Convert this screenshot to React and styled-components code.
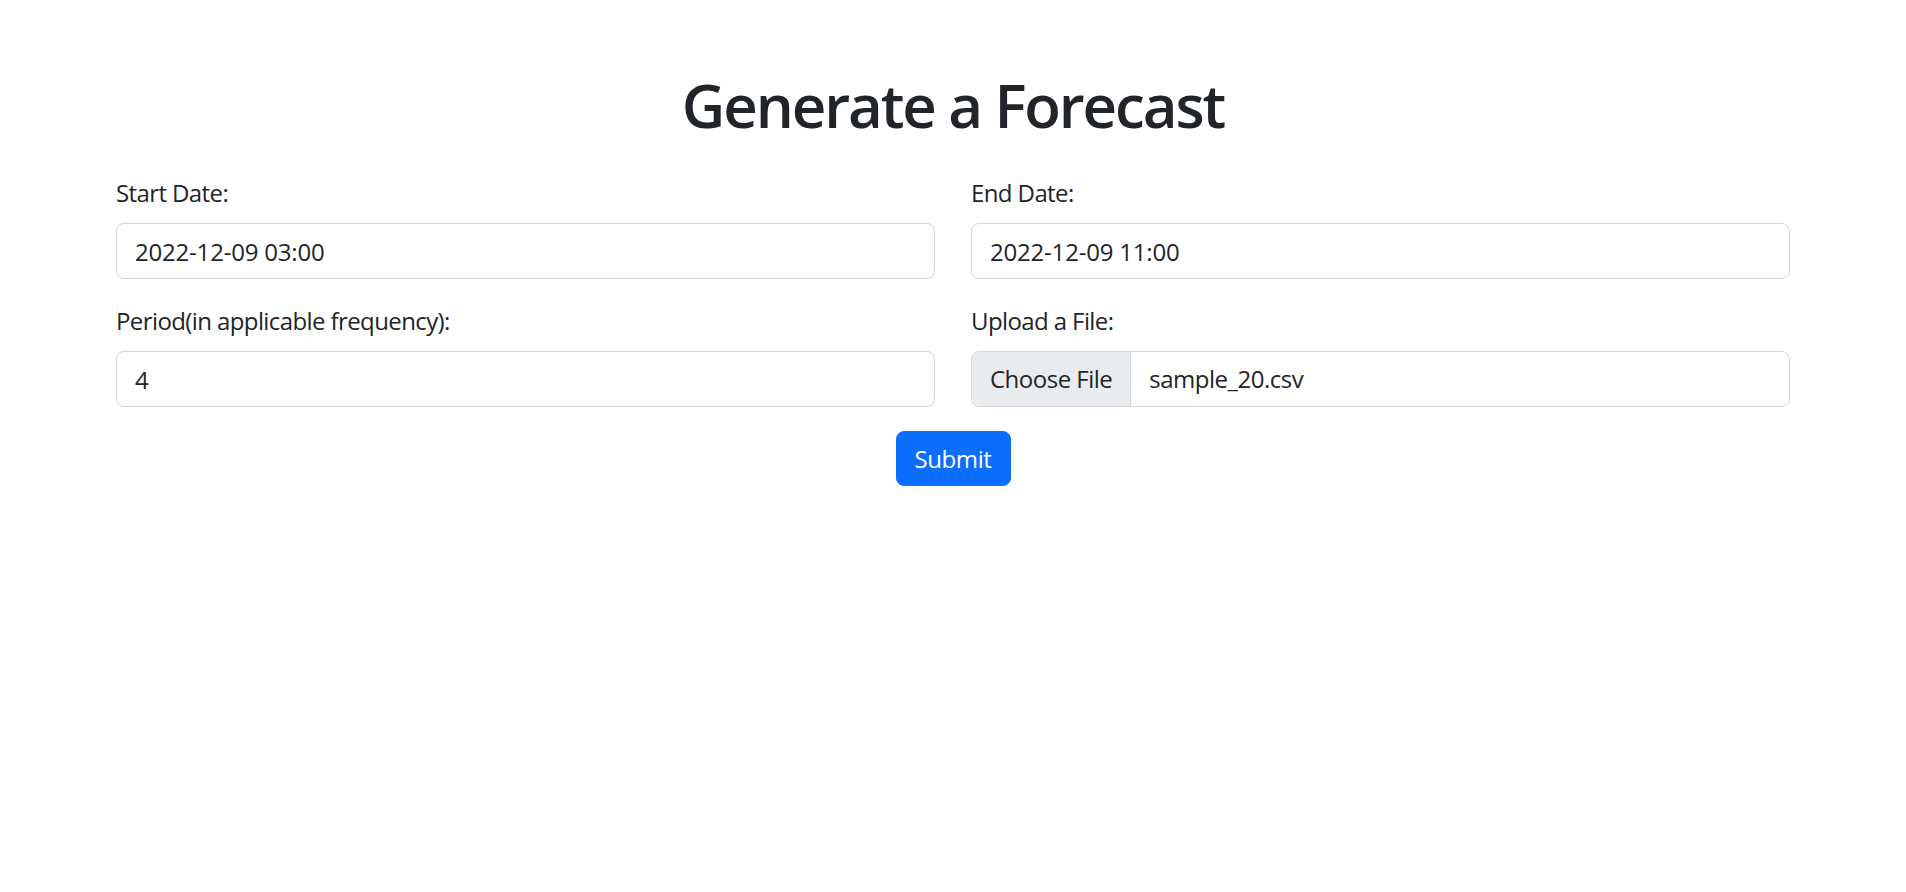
import React from "react";
import styled, { createGlobalStyle } from "styled-components";

const Global = createGlobalStyle`
  html, body { margin: 0; padding: 0; background: #fff; }
  body {
    font-family: "Open Sans", "Noto Sans", sans-serif;
    font-size: 24px;
    line-height: 1.5;
    color: #212529;
  }
  * { box-sizing: border-box; }
`;

const Container = styled.div`
  max-width: 1710px;
  margin: 0 auto;
  padding: 69px 18px 0;
`;

const Title = styled.h1`
  margin: 0 0 34px;
  text-align: center;
  font-size: 60px;
  font-weight: 600;
  line-height: 72px;
  letter-spacing: -2.1px;
  color: #212529;
`;

const Form = styled.form`
  display: flex;
  flex-direction: column;
`;

const Row = styled.div`
  display: grid;
  grid-template-columns: 1fr 1fr;
  column-gap: 36px;
`;

const Group = styled.div`
  margin-bottom: 24px;
`;

const Label = styled.label`
  display: block;
  margin-bottom: 12px;
  line-height: 36px;
  letter-spacing: -0.6px;
`;

const Input = styled.input`
  display: block;
  width: 100%;
  height: 56px;
  padding: 9px 18px;
  font: inherit;
  line-height: 36px;
  letter-spacing: -0.2px;
  color: #212529;
  background: #fff;
  border: 1px solid #d3d6da;
  border-radius: 8px;
  outline: none;
`;

const FileField = styled.div`
  display: flex;
  align-items: stretch;
  height: 56px;
  border: 1px solid #d3d6da;
  border-radius: 8px;
  overflow: hidden;
  background: #fff;
  letter-spacing: -0.5px;
`;

const FileButton = styled.span`
  display: flex;
  align-items: center;
  padding: 0 18px;
  background: #e9ecef;
  border-right: 1px solid #d3d6da;
  color: #212529;
`;

const FileName = styled.span`
  display: flex;
  align-items: center;
  padding: 0 18px;
`;

const Actions = styled.div`
  display: flex;
  justify-content: center;
`;

const SubmitButton = styled.button`
  height: 55px;
  padding: 0 18px;
  font: inherit;
  line-height: 36px;
  letter-spacing: -0.4px;
  color: #fff;
  background: #0d6efd;
  border: 1px solid #0d6efd;
  border-radius: 8px;
  cursor: pointer;
`;

export default function App() {
  return (
    <>
      <Global />
      <Container>
        <Title>Generate a Forecast</Title>
        <Form onSubmit={(e) => e.preventDefault()}>
          <Row>
            <Group>
              <Label htmlFor="start">Start Date:</Label>
              <Input id="start" type="text" defaultValue="2022-12-09 03:00" />
            </Group>
            <Group>
              <Label htmlFor="end">End Date:</Label>
              <Input id="end" type="text" defaultValue="2022-12-09 11:00" />
            </Group>
          </Row>
          <Row>
            <Group>
              <Label htmlFor="period">Period(in applicable frequency):</Label>
              <Input id="period" type="text" defaultValue="4" />
            </Group>
            <Group>
              <Label>Upload a File:</Label>
              <FileField>
                <FileButton>Choose File</FileButton>
                <FileName>sample_20.csv</FileName>
              </FileField>
            </Group>
          </Row>
          <Actions>
            <SubmitButton type="submit">Submit</SubmitButton>
          </Actions>
        </Form>
      </Container>
    </>
  );
}
